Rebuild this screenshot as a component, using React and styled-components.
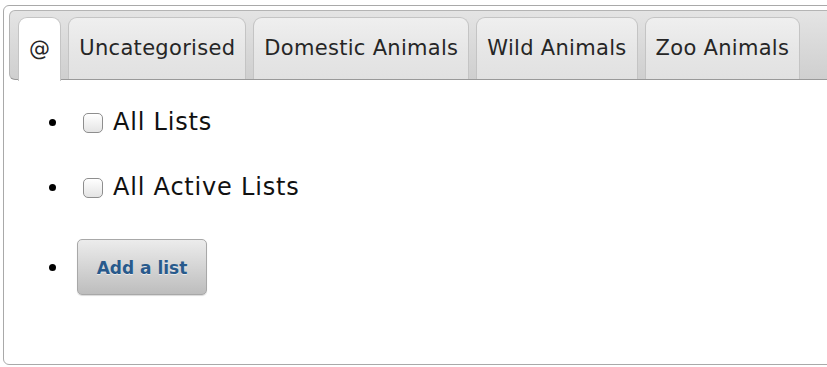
import React from "react";
import styled, { createGlobalStyle } from "styled-components";

const GlobalStyle = createGlobalStyle`
  html, body {
    margin: 0;
    padding: 0;
    background: #fff;
    overflow: hidden;
  }
  body {
    font-family: "DejaVu Sans", Verdana, sans-serif;
    color: #1a1a1a;
  }
`;

const tabs = ["@", "Uncategorised", "Domestic Animals", "Wild Animals", "Zoo Animals"];

const lists = ["All Lists", "All Active Lists"];

export default function App() {
  return (
    <Page>
      <GlobalStyle />
      <Tabs>
        <TabNav>
          {tabs.map((t, i) => (
            <Tab key={t} active={i === 0}>
              {t}
            </Tab>
          ))}
        </TabNav>
        <Panel>
          <List>
            {lists.map(l => (
              <Item key={l}>
                <Label>
                  <Check type="checkbox" />
                  {l}
                </Label>
              </Item>
            ))}
            <Item button>
              <Button>Add a list</Button>
            </Item>
          </List>
        </Panel>
      </Tabs>
    </Page>
  );
}

const Page = styled.div`
  padding: 5px 0 0 3px;
  width: 860px;
`;

const Tabs = styled.div`
  box-sizing: border-box;
  height: 360px;
  border: 1px solid #a9a9a9;
  border-radius: 6px;
  padding: 4px 5px;
  background: #fff;
`;

const TabNav = styled.ul`
  display: flex;
  align-items: flex-end;
  gap: 7px;
  margin: 0;
  padding: 6px 0 0 8px;
  height: 62px;
  list-style: none;
  border: 1px solid #b4b4b4;
  border-bottom-color: #999;
  border-radius: 6px;
  background: linear-gradient(#e4e4e4, #cfcfcf);
`;

const Tab = styled.li`
  box-sizing: border-box;
  display: flex;
  align-items: center;
  height: ${p => (p.active ? "64px" : "62px")};
  margin-bottom: ${p => (p.active ? "-2px" : "0")};
  padding: 0 10px 2px;
  font-size: 21px;
  letter-spacing: 0.3px;
  color: #262626;
  border: 1px solid #c4c4c4;
  border-bottom: none;
  border-radius: 9px 9px 0 0;
  background: ${p =>
    p.active ? "#fff" : "linear-gradient(#efefef, #e6e6e6 55%, #e1e1e1)"};
  white-space: nowrap;
`;

const Panel = styled.div`
  padding: 27px 0 0 34px;
`;

const List = styled.ul`
  display: flex;
  flex-direction: column;
  gap: 35px;
  margin: 0;
  padding: 0;
  list-style: none;
`;

const Item = styled.li`
  display: flex;
  align-items: center;
  gap: ${p => (p.button ? "21px" : "27px")};
  margin-top: ${p => (p.button ? "2px" : "0")};
  height: ${p => (p.button ? "56px" : "30px")};

  &::before {
    content: "";
    width: 7px;
    height: 7px;
    border-radius: 50%;
    background: #000;
    margin-left: 6px;
  }
`;

const Label = styled.label`
  display: flex;
  align-items: center;
  gap: 10px;
  font-size: 24px;
  letter-spacing: 0.8px;
  color: #111;
`;

const Check = styled.input`
  appearance: none;
  box-sizing: border-box;
  width: 20px;
  height: 20px;
  margin: 2px 0 0;
  border: 1px solid #8e8e8e;
  border-radius: 5px;
  background: linear-gradient(#fff, #e4e4e4);
  box-shadow: inset 0 1px 1px rgba(255, 255, 255, 0.8);
`;

const Button = styled.button`
  box-sizing: border-box;
  width: 130px;
  height: 56px;
  padding-top: 3px;
  border: 1px solid #a8a8a8;
  border-radius: 5px;
  background: linear-gradient(#ececec, #bdbdbd);
  box-shadow: 0 1px 1px rgba(0, 0, 0, 0.15);
  font-family: "DejaVu Sans", Verdana, sans-serif;
  font-weight: bold;
  font-size: 17px;
  color: #285a8c;
  text-shadow: 0 1px 0 rgba(255, 255, 255, 0.6);
`;
